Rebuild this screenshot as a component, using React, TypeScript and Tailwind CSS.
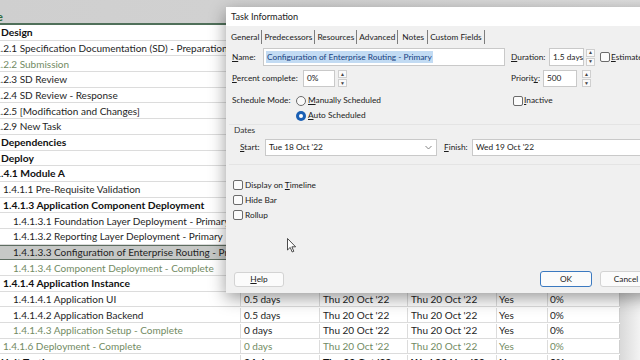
import React from 'react';

type Row = {
  name: string;
  cls: string;
  tone?: 'done' | 'bold';
  sel?: boolean;
  dur?: string;
  start?: string;
  finish?: string;
  late?: string;
  pct?: string;
  valTone?: 'done' | 'bold';
};

const rows: Row[] = [
  { name: 'Design', cls: 'ml-[1px]', tone: 'bold' },
  { name: '1.2.1 Specification Documentation (SD) - Preparation', cls: '-ml-[5px]' },
  { name: '1.2.2 Submission', cls: '-ml-[5px]', tone: 'done' },
  { name: '1.2.3 SD Review', cls: '-ml-[5px]' },
  { name: '1.2.4 SD Review - Response', cls: '-ml-[5px]' },
  { name: '1.2.5 [Modification and Changes]', cls: '-ml-[5px]' },
  { name: '1.2.9 New Task', cls: '-ml-[5px]' },
  { name: 'Dependencies', cls: 'ml-[1px]', tone: 'bold' },
  { name: 'Deploy', cls: 'ml-[1px]', tone: 'bold' },
  { name: '1.4.1 Module A', cls: '-ml-[5px]', tone: 'bold' },
  { name: '1.4.1.1 Pre-Requisite Validation', cls: 'ml-[3px]' },
  { name: '1.4.1.3 Application Component Deployment', cls: 'ml-[3px]', tone: 'bold' },
  { name: '1.4.1.3.1 Foundation Layer Deployment - Primary', cls: 'ml-[13px]' },
  { name: '1.4.1.3.2 Reporting Layer Deployment - Primary', cls: 'ml-[13px]' },
  { name: '1.4.1.3.3 Configuration of Enterprise Routing - Primary', cls: 'ml-[13px]', sel: true },
  { name: '1.4.1.3.4 Component Deployment - Complete', cls: 'ml-[13px]', tone: 'done' },
  { name: '1.4.1.4 Application Instance', cls: 'ml-[3px]', tone: 'bold' },
  { name: '1.4.1.4.1 Application UI', cls: 'ml-[13px]', dur: '0.5 days', start: "Thu 20 Oct '22", finish: "Thu 20 Oct '22", late: 'Yes', pct: '0%' },
  { name: '1.4.1.4.2 Application Backend', cls: 'ml-[13px]', dur: '0.5 days', start: "Thu 20 Oct '22", finish: "Thu 20 Oct '22", late: 'Yes', pct: '0%' },
  { name: '1.4.1.4.3 Application Setup - Complete', cls: 'ml-[13px]', tone: 'done', dur: '0 days', start: "Thu 20 Oct '22", finish: "Thu 20 Oct '22", late: 'Yes', pct: '0%' },
  { name: '1.4.1.6 Deployment - Complete', cls: 'ml-[3px]', tone: 'done', valTone: 'done', dur: '0 days', start: "Thu 20 Oct '22", finish: "Thu 20 Oct '22", late: 'Yes', pct: '0%' },
  { name: 'Unit Testing', cls: 'ml-[1px]', tone: 'bold', valTone: 'bold', dur: '24 days', start: "Thu 20 Oct '22", finish: "Wed 23 Nov '22", late: 'No', pct: '0%' },
];

const toneCls = (t?: 'done' | 'bold') =>
  t === 'done'
    ? 'text-[10px] text-[#728b63]'
    : t === 'bold'
      ? 'text-[10.3px] font-bold text-[#111]'
      : 'text-[10px] text-[#1e1e1e]';

function Checkbox() {
  return <span className="inline-block w-[10px] h-[10px] rounded-[2px] border border-[#6b6b6b] bg-[#fbfbfb] shrink-0" />;
}

function Radio({ on }: { on?: boolean }) {
  return on ? (
    <span className="w-[10px] h-[10px] rounded-full bg-[#1a5fb4] flex items-center justify-center shrink-0">
      <span className="w-[4px] h-[4px] rounded-full bg-white" />
    </span>
  ) : (
    <span className="w-[10px] h-[10px] rounded-full border border-[#6b6b6b] bg-[#f9f9f9] shrink-0" />
  );
}

function Spinner() {
  return (
    <div className="flex flex-col gap-[1px] w-[9px] shrink-0">
      <div className="h-[8px] bg-[#fafafa] border border-[#cfcfcf] flex items-center justify-center text-[5px] leading-none text-[#444]">▲</div>
      <div className="h-[8px] bg-[#fafafa] border border-[#cfcfcf] flex items-center justify-center text-[5px] leading-none text-[#444]">▼</div>
    </div>
  );
}

function Chevron() {
  return (
    <svg width="7" height="5" viewBox="0 0 7 5" className="shrink-0">
      <path d="M0.5 1 L3.5 4 L6.5 1" fill="none" stroke="#777" strokeWidth="0.9" />
    </svg>
  );
}

const tabs = [
  { t: 'General', cls: 'pr-[2px]' },
  { t: 'Predecessors', cls: 'pl-[2px] pr-[2px]' },
  { t: 'Resources', cls: 'pl-[2px] pr-[2px]' },
  { t: 'Advanced', cls: 'pl-[2px] pr-[2px]' },
  { t: 'Notes', cls: 'pl-[4px] pr-[3px]' },
  { t: 'Custom Fields', cls: 'pl-[2px] pr-[2px]' },
];

function Dialog() {
  return (
    <div className="absolute left-[226px] top-[7px] w-[440px] h-[286px] bg-[#f0f0f0] shadow-[0_5px_16px_rgba(0,0,0,0.4)] flex flex-col text-[8.3px] text-[#1b1b1b] whitespace-nowrap font-['Lato',sans-serif]">
      <div className="h-[19px] bg-white pl-[5px] flex items-center text-[9.2px] text-[#222]">Task Information</div>
      <div className="h-[16px] mt-[3px] flex items-center pl-[5px]">
        {tabs.map((t) => (
          <span key={t.t} className={`h-[14px] flex items-center border-r border-[#7d7d7d] ${t.cls}`}>{t.t}</span>
        ))}
      </div>

      <div className="flex items-center h-[18px] mt-[3px] pl-[6px]">
        <span className="w-[31px]"><u>N</u>ame:</span>
        <div className="w-[242px] h-[18px] bg-white border border-[#c9c9c9] flex items-center pl-[2px]">
          <span className="bg-[#c2dbf3] text-[#163f80] px-[1px] leading-[12px]">Configuration of Enterprise Routing - Primary</span>
        </div>
        <span className="ml-[6px] w-[38px]"><u>D</u>uration:</span>
        <div className="w-[35px] h-[18px] bg-white border border-[#c9c9c9] flex items-center pl-[3px]">1.5 days</div>
        <div className="ml-[2px]"><Spinner /></div>
        <div className="ml-[5px] flex items-center gap-[1px]"><Checkbox /><span><u>E</u>stimated</span></div>
      </div>

      <div className="flex items-center h-[17px] mt-[4px] pl-[6px]">
        <span className="w-[71px]"><u>P</u>ercent complete:</span>
        <div className="w-[32px] h-[17px] bg-white border border-[#c9c9c9] flex items-center pl-[3px]">0%</div>
        <div className="ml-[3px]"><Spinner /></div>
        <span className="ml-[164px] w-[32px]">Priorit<u>y</u>:</span>
        <div className="w-[34px] h-[17px] bg-white border border-[#c9c9c9] flex items-center pl-[3px]">500</div>
        <div className="ml-[5px]"><Spinner /></div>
      </div>

      <div className="flex items-center h-[15px] mt-[6px] pl-[6px]">
        <span className="w-[64px]">Schedule Mode:</span>
        <Radio />
        <span className="ml-[2px] w-[205px]"><u>M</u>anually Scheduled</span>
        <Checkbox />
        <span className="ml-[1px]"><u>I</u>nactive</span>
      </div>
      <div className="flex items-center h-[15px] pl-[70px]">
        <Radio on />
        <span className="ml-[2px]"><u>A</u>uto Scheduled</span>
      </div>

      <div className="mt-[1px] mx-[3px] border-t border-[#e4e4e4] h-[12px] flex items-center pl-[5px] text-[#333]">Dates</div>
      <div className="flex items-center h-[17px] mt-[3px] pl-[14px]">
        <span className="w-[25px]"><u>S</u>tart:</span>
        <div className="w-[172px] h-[17px] bg-white border border-[#c9c9c9] flex items-center justify-between pl-[3px] pr-[4px]">
          <span>Tue 18 Oct '22</span>
          <Chevron />
        </div>
        <span className="ml-[7px] w-[28px]"><u>F</u>inish:</span>
        <div className="w-[190px] h-[17px] bg-white border border-[#c9c9c9] flex items-center justify-between pl-[3px] pr-[4px]">
          <span>Wed 19 Oct '22</span>
          <Chevron />
        </div>
      </div>
      <div className="mt-[8px] ml-[3px] border-t border-[#e4e4e4]" />

      <div className="flex flex-col pl-[7px] mt-[13px]">
        <div className="flex items-center h-[14px] gap-[2px]"><Checkbox /><span>Display on <u>T</u>imeline</span></div>
        <div className="flex items-center h-[14px] gap-[2px] mt-[1px]"><Checkbox /><span>Hide Bar</span></div>
        <div className="flex items-center h-[14px] gap-[2px] mt-[1px]"><Checkbox /><span>Rollup</span></div>
      </div>

      <div className="flex-1" />
      <div className="flex items-center h-[16px] mb-[6px]">
        <button className="ml-[8px] w-[50px] h-[15px] bg-[#fbfbfb] border border-[#d3d3d3] rounded-[3px] flex items-center justify-center"><u>H</u>elp</button>
        <button className="ml-[256px] w-[52px] h-[16px] bg-[#fbfbfb] border border-[#3b79c0] rounded-[3px] flex items-center justify-center">OK</button>
        <button className="ml-[8px] w-[52px] h-[16px] bg-[#fbfbfb] border border-[#d3d3d3] rounded-[3px] flex items-center justify-center">Cancel</button>
      </div>
    </div>
  );
}

function Cursor() {
  return (
    <svg className="absolute left-[287px] top-[238px]" width="10" height="15" viewBox="0 0 10 15">
      <path d="M0.5 0.5 L0.5 12 L3.2 9.4 L5.2 14 L6.8 13.3 L4.9 8.8 L8.6 8.8 Z" fill="#fff" stroke="#222" strokeWidth="0.8" strokeLinejoin="round" />
    </svg>
  );
}

export default function App() {
  return (
    <div className="relative w-[640px] h-[360px] overflow-hidden bg-white font-['Lato',sans-serif] text-[10px]">
      <div className="h-[23px] bg-gradient-to-r from-[#cfcfcf] via-[#d2d2d2] to-[#dedede] flex items-end pb-[1px]">
        <span className="text-[#2f6b3c] text-[11px] font-bold leading-none -ml-[3px]">e</span>
      </div>
      <div className="h-[2px] bg-[#50705a] w-[620px]" />
      <div className="flex">
        <div className="w-[620px] shrink-0">
          {rows.map((r, i) => (
            <div
              key={i}
              className={`flex h-[15.7px] items-center pt-[1px] border-b whitespace-nowrap ${r.sel ? 'bg-[#c6c8c6] border-[#5e6d61] border-t' : 'border-[#dcdcdc]'}`}
            >
              <div className="w-[241px] h-full flex items-center overflow-hidden border-r border-[#dcdcdc]">
                <span className={`${r.cls} ${toneCls(r.tone)}`}>{r.name}</span>
              </div>
              <div className={`w-[79px] h-full flex items-center pl-[3px] border-r border-[#dcdcdc] ${toneCls(r.valTone)}`}>{r.dur}</div>
              <div className={`w-[88px] h-full flex items-center pl-[3px] border-r border-[#dcdcdc] ${toneCls(r.valTone)}`}>{r.start}</div>
              <div className={`w-[89px] h-full flex items-center pl-[3px] border-r border-[#dcdcdc] ${toneCls(r.valTone)}`}>{r.finish}</div>
              <div className={`w-[51px] h-full flex items-center pl-[2px] border-r border-[#dcdcdc] ${toneCls(r.valTone)}`}>{r.late}</div>
              <div className={`w-[72px] h-full flex items-center pl-[2px] border-r border-[#cfcfcf] ${toneCls(r.valTone)}`}>{r.pct}</div>
            </div>
          ))}
        </div>
        <div className="flex-1 h-[340px] bg-gradient-to-r from-[#d9d9d9] to-[#f3f3f3]" />
      </div>
      <Dialog />
      <Cursor />
    </div>
  );
}
